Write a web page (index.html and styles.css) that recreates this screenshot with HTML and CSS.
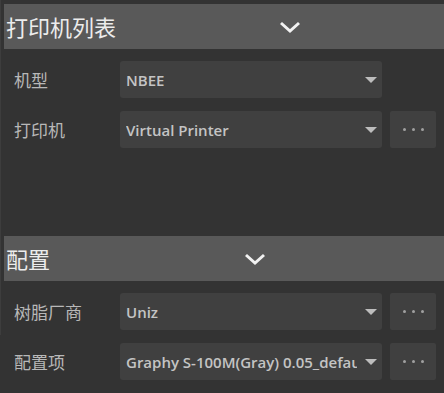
FILE: index.html
```html
<!DOCTYPE html>
<html lang="zh-CN">
<head>
  <meta charset="UTF-8" />
  <title>打印机设置</title>
  <link rel="stylesheet" href="styles.css">
</head>
<body>
  <div class="panel">
    <div class="section-head">
      <span class="section-title">打印机列表</span>
      <svg class="chevron chevron-printer" width="22" height="14" viewBox="0 0 22 14"><path d="M2 3 L11 11 L20 3" fill="none" stroke="#f2f2f2" stroke-width="3"/></svg>
    </div>

    <div class="row row-first">
      <span class="label">机型</span>
      <div class="select"><span class="value">NBEE</span><span class="arrow"></span></div>
    </div>
    <div class="row">
      <span class="label">打印机</span>
      <div class="select"><span class="value">Virtual Printer</span><span class="arrow"></span></div>
      <div class="more"><i></i><i></i><i></i></div>
    </div>

    <div class="section-head section-config">
      <span class="section-title">配置</span>
      <svg class="chevron chevron-config" width="22" height="14" viewBox="0 0 22 14"><path d="M2 3 L11 11 L20 3" fill="none" stroke="#f2f2f2" stroke-width="3"/></svg>
    </div>

    <div class="row row-first">
      <span class="label">树脂厂商</span>
      <div class="select"><span class="value">Uniz</span><span class="arrow"></span></div>
      <div class="more"><i></i><i></i><i></i></div>
    </div>
    <div class="row">
      <span class="label">配置项</span>
      <div class="select"><span class="value">Graphy S-100M(Gray) 0.05_default</span><span class="arrow"></span></div>
      <div class="more"><i></i><i></i><i></i></div>
    </div>
  </div>
</body>
</html>
```

FILE: styles.css
```css
body {
  margin: 0;
  background: #333333;
  font-family: "Open Sans", "Noto Sans CJK SC", sans-serif;
  width: 444px;
  height: 393px;
  overflow: hidden;
}
.panel {
  height: 335px;
  border-left: 1px solid #3d3d3d;
  padding: 4px 0 0 3px;
  box-sizing: border-box;
}
.section-head {
  height: 45px;
  background: #595959;
  display: flex;
  align-items: center;
}
.section-config {
  margin-top: 88px;
}
.section-title {
  font-family: "Noto Sans CJK SC", sans-serif;
  font-size: 22px;
  color: #ececec;
  padding-left: 2px;
  line-height: 1;
  margin-top: -2px;
}
.chevron {
  display: block;
}
.chevron-printer {
  margin-left: 163px;
}
.chevron-config {
  margin-left: 194px;
}
.row {
  display: flex;
  align-items: center;
  height: 37px;
  margin-top: 13px;
}
.row-first {
  margin-top: 12px;
}
.label {
  width: 106px;
  padding-left: 10px;
  font-family: "Noto Sans CJK SC", sans-serif;
  font-size: 17px;
  color: #b8b8b8;
}
.select {
  width: 262px;
  height: 37px;
  background: #404040;
  border-radius: 3px;
  display: flex;
  align-items: center;
  padding: 1px 4px 0 6px;
  box-sizing: border-box;
}
.value {
  flex: 1;
  font-size: 15px;
  font-weight: 600;
  color: #c4c4c4;
  white-space: nowrap;
  overflow: hidden;
  margin-right: 8px;
  text-overflow: clip;
}
.arrow {
  width: 0;
  height: 0;
  border-left: 6px solid transparent;
  border-right: 6px solid transparent;
  border-top: 6px solid #bdbdbd;
  margin-right: 1px;
}
.more {
  width: 46px;
  height: 37px;
  margin-left: 8px;
  background: #404040;
  border-radius: 2px;
  display: flex;
  align-items: center;
  justify-content: center;
  gap: 6px;
}
.more i {
  width: 3px;
  height: 3px;
  border-radius: 50%;
  background: #a0a0a0;
}
```
